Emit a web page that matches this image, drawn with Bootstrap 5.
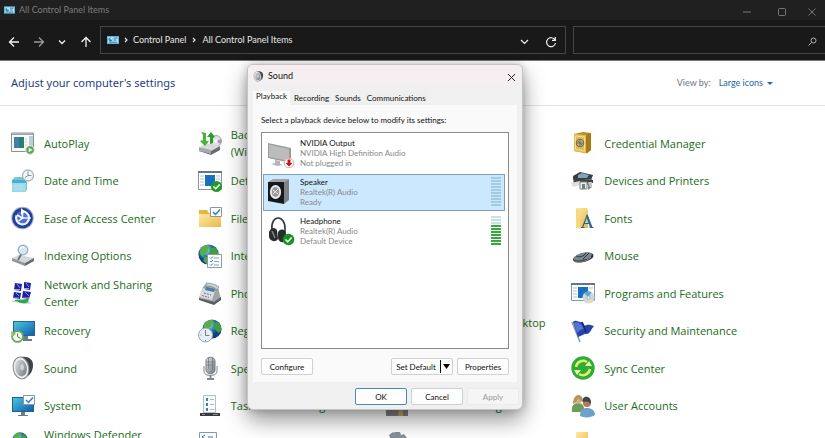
<!DOCTYPE html>
<html lang="en">
<head>
<meta charset="utf-8">
<meta name="viewport" content="width=device-width, initial-scale=1">
<title>All Control Panel Items</title>
<link href="https://cdn.jsdelivr.net/npm/bootstrap@5.3.0/dist/css/bootstrap.min.css" rel="stylesheet">
<style>
  body { font-family: "Lato", "Open Sans", sans-serif; font-size: 9px; line-height: 12px; background: #fff; color: #222; }
  button { line-height: inherit; }
  .title-strip { height: 20px; background: #202020; color: #7c7c7c; }
  .title-strip button { color: #777; width: 35px; }
  .title-strip button:last-child { width: 17px; text-align: left; margin-left: 9px; }
  .nav-strip { height: 41px; background: #191919; color: #e6e6e6; border-bottom: 1px solid #777; }
  .nav-strip button { color: #f2f2f2; }
  .nav-arrows { width: 100px; padding-left: 8px; }
  .nav-arrows button:nth-child(2) { color: #999; }
  .address-box { height: 28px; border: 1px solid #464646; flex: 0 1 466px; padding-left: 6px; }
  .address-box a { color: #e6e6e6; }
  .search-box { height: 28px; border: 1px solid #464646; border-right: 0; margin-left: 7px; }
  .search-box input { background: transparent; color: #e6e6e6; min-width: 0; outline: 0; }
  .nav-strip .search-box button { color: #b5b5b5; }
  .page-head { height: 45px; padding: 0 52px 0 11px; border-bottom: 1px solid #e3e3e3; }
  .page-head h1 { font: 11px/16px "Noto Sans", sans-serif; color: #1f3f7f; }
  .view-menu { color: #2468a8; font-size: 9px; line-height: 12px; }
  .view-menu::after { margin-left: 4px; vertical-align: 1px; border-width: 3px 3px 0; }
  .items-grid { display: grid; grid-template-columns: repeat(4, minmax(0, 1fr)); grid-auto-rows: 38px 37px; padding: 18px 67px 0 11px; font: 11px/17px "Open Sans", sans-serif; }
  .items-grid a { color: #1b6b20; gap: 9px; }
  .items-grid span { max-width: 134px; }
  .items-grid svg { width: 24px; height: 24px; flex: none; }
  .sound-window { left: 247px; top: 64px; width: 276px; background: #f0f0f0; border: 1px solid #c4c4c4; border-radius: 6px; box-shadow: 0 10px 22px rgba(0, 0, 0, .42), 0 0 8px rgba(0, 0, 0, .2); font-size: 8px; line-height: 10px; color: #111; overflow: hidden; }
  .sound-title { height: 22px; padding: 0 5px; font-size: 9px; background: linear-gradient(#f8edf0, #f5eff1 70%, #f0f0f0); }
  .sound-tabs { padding: 4px 0 0 5px; height: 18px; }
  .sound-tabs .nav-link { color: #111; padding: 2px; border: 0; border-radius: 0; line-height: 10px; margin: 0 0 0 2px; }
  .sound-tabs .nav-link.active { background: #fafafa; padding: 0 3px 4px; margin: 0; }
  .sound-panel { margin: 0 5px; background: #fafafa; padding: 10px 8px 7px; }
  .device-list { height: 217px; border: 1px solid #8a8a8a; background: #fff; padding: 2px 3px 0 1px; margin-top: 7px; gap: 2px; }
  .device-list .list-group-item { border: 1px solid transparent; padding: 2px 3px; height: 37px; color: #888; gap: 5px; background: none; }
  .device-list .list-group-item strong { color: #111; font-weight: 400; }
  .device-list .list-group-item.active { background: #cce8ff; border-color: #7fa0b8; margin: 0; }
  .device-list svg { width: 28px; height: 30px; flex: none; }
  .meter { width: 10px; gap: 1px; }
  .meter i { height: 2px; background: #a0cbe2; }
  .meter .dim { background: #c8dfe4; }
  .meter .lit { background: #35a83d; }
  .panel-actions { margin-top: 9px; }
  .win-btn { font-size: 8px; line-height: 10px; height: 17px; width: 52px; padding: 0; background: #fdfdfd; border: 1px solid #d0d0d0; border-radius: 2px; color: #111; }
  .win-btn.default { border-color: #4a88b8; }
  .win-btn:disabled { color: #999; background: #f5f5f5; border-color: #ebebeb; opacity: 1; }
  .split-btn { width: 62px; }
  .split-mark { width: 12px; border-left: 1px solid #111; height: 13px; }
  .sound-foot { padding: 6px 3px 4px; gap: 4px; }
</style>
</head>
<body>
<svg width="0" height="0" class="position-absolute" aria-hidden="true">
  <defs>
    <linearGradient id="blue" x2="1" y2="1"><stop stop-color="#49c6df"/><stop offset="1" stop-color="#145da8"/></linearGradient>
    <linearGradient id="gold" x2="1" y2="1"><stop stop-color="#ffe9a3"/><stop offset="1" stop-color="#e9b949"/></linearGradient>
    <linearGradient id="steel" x2="1" y2="1"><stop stop-color="#e6e8ea"/><stop offset="1" stop-color="#6d7276"/></linearGradient>
    <radialGradient id="globe" cx=".4" cy=".3"><stop stop-color="#8fd6f5"/><stop offset=".6" stop-color="#2574bb"/><stop offset="1" stop-color="#123f83"/></radialGradient>
    <symbol id="i-globe" viewBox="0 0 20 20"><circle cx="10" cy="10" r="9.6" fill="url(#globe)"/><path d="M2 6c2-4 5-5.500 8-5l2 2-3 2 1 2-4 2-1 4-3-3z" fill="#58b13d"/><path d="M12 4l4-1c3 3 4 6 3 9l-3 2-2-3-3-2z" fill="#3f9f3b"/><path d="M6 12l4 1 1 3-3 3-3-3z" fill="#4fa83f"/></symbol>
    <symbol id="i-panel" viewBox="0 0 12 8"><path d="M0 0h12v8H0z" fill="#5fb4dc"/><path d="M1 1h10v6H1z" fill="#b9e4f7"/><circle cx="3.500" cy="3.500" r="2" fill="#2e83b8"/><path d="M3.500 3.500V1.500a2 2 0 012 2z" fill="#fff"/><path d="M6.500 2h4M6.500 4h3M2 6.200h8" stroke="#287bae" fill="none"/></symbol>
    <symbol id="i-autoplay" viewBox="0 0 24 24"><path d="M.5 2h22v18.500H.5z" fill="#f7f8f8" stroke="#8a9297"/><path d="M1 2.500h21v1.500H1z" fill="#9ba4a9"/><path d="M3 6h10v11H3z" fill="#28806f"/><path d="M3 6h5v11H3z" fill="#447fae"/><path d="M14 8h2M14 11h2M14 14h2" stroke="#cfd4d6"/><path d="M18 5h4v12h-4z" fill="#b8d0d7"/><circle cx="19" cy="19" r="4.300" fill="#58a551" stroke="#e1eddf"/><path d="M17.700 16.700l3.800 2.300-3.800 2.300z" fill="#fff"/></symbol>
    <symbol id="i-backup" viewBox="0 0 24 24"><circle cx="18" cy="10" r="5.500" fill="#dfe3e6" stroke="#aaa"/><path d="M18 10l5-2a5 5 0 01-1 5z" fill="#b494b8"/><path d="M2 16l6-4 14 3-9 5z" fill="#d7d9da"/><path d="M1 17l12 3 9-5v4l-9 5-12-4z" fill="#686c6e"/><path d="M1 16l12 3v4L1 20z" fill="#a5a9ab"/><circle cx="18" cy="10" r="1.500" fill="#fff"/><path d="M3 1l5 1v8h3l-4 5-5-5 3-1V4z" fill="#46b535"/><path d="M12 13V6H9l4-5 4 5-2 1v5z" fill="#2c9c2d"/></symbol>
    <symbol id="i-color" viewBox="0 0 24 24"><path d="M2 4h20v13H2z" fill="url(#blue)"/><path d="M8 18h8v3H8z" fill="#777"/></symbol>
    <symbol id="i-safe" viewBox="0 0 24 24"><path d="M3 3l9-2 8 1v17l-4 3.500L3 20z" fill="#b88b28"/><path d="M3 3l12 1v18L3 20z" fill="#e3bd53"/><path d="M15 4l5-2v17l-5 3z" fill="#a77919"/><path d="M4.500 5l9 .8V20l-9-1.500z" fill="none" stroke="#f4dc8c"/><circle cx="9" cy="12" r="3.800" fill="#b9b59e" stroke="#786437"/><path d="M6 12h6M9 9v6M7 10l4 4" stroke="#63604c" stroke-width=".8"/></symbol>
    <symbol id="i-date" viewBox="0 0 24 24"><path d="M1 11l3-3h12v13l-2 2H1z" fill="#75c5dd"/><path d="M1 11h14v12H1z" fill="#9bd9ea"/><path d="M1 11h14v3H1z" fill="#4eaecd"/><path d="M2 17h12M2 20h12M5 15v7M10 15v7" stroke="#b5e6f2" stroke-width=".8"/><circle cx="17" cy="6.500" r="5.500" fill="#f2f5f6" stroke="#a9b6bb" stroke-width="1.300"/><path d="M17 2.500v4h3.500M17 6.500l-3 2" stroke="#6c7b83" fill="none" stroke-width=".8"/></symbol>
    <symbol id="i-default" viewBox="0 0 24 24"><path d="M.5 2.500h23v18H.5z" fill="#fff" stroke="#8997a0"/><path d="M0 2h24v2H0z" fill="#667681"/><path d="M2 7h4M2 10h4M2 13h4M2 16h4M18 7h4M18 10h4" stroke="#b8bfc4"/><path d="M7 6h10v11H7z" fill="#176fc1"/><circle cx="18.500" cy="17.500" r="5.500" fill="#259a26"/><path d="M15.500 17.500l2.200 2.200 4-4.200" fill="none" stroke="#fff" stroke-width="1.600"/></symbol>
    <symbol id="i-printer" viewBox="0 0 24 24"><path d="M2 7l7-4 13 3-2 5-18-1z" fill="#353d46"/><path d="M7 6l4-2 7 2-2 3H7z" fill="#86a2b4"/><path d="M3 10h18v8l-4 3v-5H7l-5 1z" fill="#85898c"/><path d="M2 9l20 2v3H3z" fill="#3f4347"/><path d="M0 14l9-2v4l-7 2z" fill="#dcdfe0"/><path d="M9 13h7v7H9z" fill="#f0f0f0" stroke="#81878a"/><path d="M11 15h3v5h-3z" fill="#6f7f82"/><path d="M17 13h4v5h-2z" fill="#c5c8ca"/></symbol>
    <symbol id="i-ease" viewBox="0 0 24 24"><circle cx="11.500" cy="12" r="11.300" fill="#adb3c0"/><circle cx="11.500" cy="12" r="10.300" fill="#203f9d"/><circle cx="11.500" cy="12" r="7" fill="#4f70cf"/><path d="M5.500 9.500a6.500 6.500 0 105-4" fill="none" stroke="#f2f5ff" stroke-width="2.200"/><path d="M11.500 4v8H20" stroke="#e7edff" stroke-width="1.600" fill="none"/><path d="M10 2l4 3.500-4 3.500z" fill="#fff"/><path d="M6 9l5.500 3-4 3" stroke="#fff" stroke-width="1.500" fill="none"/></symbol>
    <symbol id="i-folderopt" viewBox="0 0 24 24"><path d="M1 4h8l2 3h11v14H1z" fill="#e5b643"/><path d="M1 8h22v13H1z" fill="url(#gold)"/><path d="M12.500 1.500h11v9h-11z" fill="#fff" stroke="#8999a4"/><path d="M15 6l2.500 2.500L22 3.500" fill="none" stroke="#2c80c5" stroke-width="1.500"/></symbol>
    <symbol id="i-fonts" viewBox="0 0 24 24"><path d="M5 2h11l1 2v18H5z" fill="url(#gold)"/><path d="M5 2l4 3v18l-4-2z" fill="#f7d87f"/><path d="M11.500 21.500l4.500-12 5 12M13 17.500h6M10 21.500h3.500M18.500 21.500h4" stroke="#216c98" stroke-width="1.200" fill="none"/><path d="M16 9.500l4 12" stroke="#216c98" stroke-width="2"/></symbol>
    <symbol id="i-indexing" viewBox="0 0 24 24"><path d="M1 14l7-3 15 3-9 5z" fill="#d5d7d8"/><path d="M1 14l13 5v3L1 17z" fill="#92979a"/><path d="M14 19l9-5v3l-9 5z" fill="#656b6e"/><circle cx="12" cy="6" r="4.800" fill="#d3e7f5" stroke="#8fa9bd" stroke-width="1.200"/><path d="M10 10.500L7 16" stroke="#69737b" stroke-width="1.800"/><path d="M9 5a4 4 0 014-2" stroke="#fff" stroke-width="1.200" fill="none"/></symbol>
    <symbol id="i-internet" viewBox="0 0 24 24"><use href="#i-globe" width="21" height="21"/><path d="M9.500 10.500h14v13h-14z" fill="#fafcfd" stroke="#8f9aa4"/><path d="M12 13.500l1 1 2-2M12 17l1 1 2-2M12 20.500l1 1 2-2" stroke="#357ebd" fill="none"/><path d="M16 14h5M16 17.500h5M16 21h5" stroke="#8ba2b0"/></symbol>
    <symbol id="i-mouse" viewBox="0 0 24 24"><path d="M2 15c5-6 14-8 20-5 2 4-3 6-9 8-6 1-11 1-11-3z" fill="#30363b"/><path d="M2 14c5-5 13-7 19-4-1 4-4 5-10 6-4 1-8 1-9-2z" fill="#7b878f"/><path d="M5 12c4 2 8 0 10-3M12 15l6-6" stroke="#313c44" fill="none"/><path d="M3 17c4 2 12 1 17-4" stroke="#7f898f" fill="none"/></symbol>
    <symbol id="i-network" viewBox="0 0 24 24"><g fill="#1b22a9"><path d="M4 2l7 1-1 7-7-1zM13 1l7 1-1 7-6-1zM3 11l7 1-1 6-7-1zM12 10l8 1-2 7-7-1z"/></g><path d="M6 3l3 4M15 2l3 4M5 12l3 3M14 11l4 4" stroke="#8799ee"/><path d="M3 8.500h6M13 7.500h5M2 17h6M12 17h6" stroke="#c3c9dd" stroke-width=".8"/><path d="M4 19c4-1 8 0 11-1l3-1-1 5c-5 1-8 0-13-2z" fill="#30a74c"/><path d="M1 20l6 1M15 22h5" stroke="#b9c3c6"/></symbol>
    <symbol id="i-phone" viewBox="0 0 24 24"><path d="M5 6l4-4 11 4 3 12-7 4L1 17z" fill="#9fa6aa"/><path d="M1 17l15 4 7-5v3l-7 5-15-5z" fill="#575f64"/><path d="M5 7l12 3-3 9L1 16z" fill="#d9dcde"/><path d="M8 6l9 2-1 3-9-2z" fill="#447fa8"/><path d="M6 12l7 2M4 14.500l7 2" stroke="#747b80" stroke-dasharray="2 1"/><path d="M8 2c4 0 10 1 13 4l-2 3c-3-3-7-4-11-4z" fill="#c9ced1" stroke="#777e82" stroke-width=".6"/></symbol>
    <symbol id="i-programs" viewBox="0 0 24 24"><path d="M.5 2.500h23v17H.5z" fill="#fff" stroke="#89949b"/><path d="M0 2h24v2H0z" fill="#667681"/><path d="M2 7h4M2 10h4M2 13h4M2 16h4M18 7h4" stroke="#b8bfc4"/><path d="M7 6h10v11H7z" fill="#176fc1"/><circle cx="17.500" cy="16.500" r="6" fill="#c9d8e1"/><path d="M17.500 16.500l-4-4a6 6 0 017-1.500z" fill="#5ba6cd"/><path d="M17.500 16.500l5 3a6 6 0 01-7 2z" fill="#ead8bd"/><circle cx="17.500" cy="16.500" r="1.500" fill="#fff" stroke="#98acb7"/></symbol>
    <symbol id="i-recovery" viewBox="0 0 24 24"><path d="M2 2h22v15H2z" fill="#1c6897"/><path d="M3 3h20v13H3z" fill="url(#blue)"/><path d="M12 17h5v3h4v2h-9z" fill="#6f7c84"/><circle cx="6.500" cy="17.500" r="6.300" fill="#66aa51"/><circle cx="6.500" cy="17.500" r="4.600" fill="#f7faf5"/><path d="M6.500 14.500v3l3 2" stroke="#46733f" fill="none"/><path d="M0 12l1 6 4-3z" fill="#83c162"/></symbol>
    <symbol id="i-region" viewBox="0 0 24 24"><use href="#i-globe" x="4" width="20" height="20"/><circle cx="7.500" cy="16" r="7" fill="#e8eff4" stroke="#93a7b5"/><path d="M7.500 11v5.500h4M2.500 16h1M7.500 21v1" stroke="#6e8492" fill="none"/></symbol>
    <symbol id="i-flag" viewBox="0 0 24 24"><path d="M1 3l8 20" stroke="#8d9da9" stroke-width="1.600"/><path d="M2 3c4-3 5 1 9 0l3 4c2-2 5-1 9 0-4 5-4 8-8 8-3 0-4 2-8 3z" fill="#2743aa"/><path d="M3 4c4-2 5 1 7 1l3 5c-3 0-5 2-7 4z" fill="#5376d8"/><path d="M11 3l4 10" stroke="#15287e" stroke-width="1.600"/></symbol>
    <symbol id="i-sound" viewBox="0 0 24 24"><path d="M10 1c7-1 12 2 12 8s-3 11-9 13z" fill="#3d4348"/><ellipse cx="10" cy="12" rx="7.800" ry="11" transform="rotate(-10 10 12)" fill="#eceeef" stroke="#83898d"/><ellipse cx="10" cy="12" rx="5.800" ry="8.500" transform="rotate(-10 10 12)" fill="url(#steel)"/><ellipse cx="11" cy="11" rx="2.300" ry="3.500" fill="#d4d7d9" stroke="#9aa0a5" stroke-width=".7"/></symbol>
    <symbol id="i-mic" viewBox="0 0 24 24"><path d="M8 5c0-5 9-5 9 0v9c0 5-9 5-9 0z" fill="url(#steel)" stroke="#777d83"/><path d="M8 6h9M8 9h9M10.500 2v11M14.500 2v11" stroke="#747c83" stroke-width=".8"/><path d="M6 10v5c0 6 13 6 13 0v-5" fill="none" stroke="#a5a9af" stroke-width="1.400"/><path d="M12.500 19v3M9 23h7" stroke="#81878c" stroke-width="1.800"/></symbol>
    <symbol id="i-sync" viewBox="0 0 24 24"><circle cx="12" cy="12" r="11.700" fill="#2eac35"/><path d="M5 11a7.200 7.200 0 0111-5M19 13a7.200 7.200 0 01-11 5" fill="none" stroke="#dcee70" stroke-width="2.600"/><path d="M21 10h-7l4-5zM3 14h7l-4 5z" fill="#f1f6a3"/></symbol>
    <symbol id="i-system" viewBox="0 0 24 24"><path d="M1 3h22v15H1z" fill="#17658e"/><path d="M2 4h20v13H2z" fill="url(#blue)"/><path d="M10 18h4v3h3v1H7v-1h3z" fill="#6f7c84"/><path d="M12.500 1.500h11v9h-11z" fill="#fff" stroke="#8999a4"/><path d="M15 6l2.500 2.500L22 3.500" fill="none" stroke="#2c80c5" stroke-width="1.500"/></symbol>
    <symbol id="i-taskbar" viewBox="0 0 24 24"><path d="M5.500 1.500h12v17h-12z" fill="#f8fafb" stroke="#b4bec5"/><path d="M8 4h2v3H8zM8 9h2v3H8zM8 14h2v3H8z" fill="#3b83b7"/><path d="M12 5.500h4M12 10.500h4M12 15.500h4" stroke="#a4b9c4"/><path d="M2 19h20v3H2z" fill="#393a3e"/><path d="M4 20.500h3M15 20.500h5" stroke="#898d91"/></symbol>
    <symbol id="i-trouble" viewBox="0 0 24 24"><path d="M1 4h22v18H1z" fill="#9a9c9e"/><path d="M5 14l6-4 4 6 8-3v9H1v-8z" fill="#84837f"/><path d="M14 15l4 1v6h-5z" fill="#bfa575"/></symbol>
    <symbol id="i-users" viewBox="0 0 24 24"><path d="M1 18c-1-6 2-9 6-9s7 3 6 9z" fill="#6c9d58"/><circle cx="7" cy="6" r="3.800" fill="#d6b087"/><path d="M2 10c0-11 10-12 10-2-2-1-3-2-5-4-1 3-2 4-5 6z" fill="#b19a55"/><path d="M9 22c0-6 3-8 7-8s8 2 8 7c-4 3-11 3-15 1z" fill="#6d9fd0"/><circle cx="16" cy="9" r="4" fill="#b97955"/><path d="M12 8c-2-7 8-7 8 0l-1 2c-1-3-4-3-7-2z" fill="#41444d"/></symbol>
    <symbol id="i-firewall" viewBox="0 0 24 24"><use href="#i-globe" x="1" y="1" width="16" height="16"/><path d="M8 12h15v11H8z" fill="#b45638"/></symbol>
    <symbol id="i-tools" viewBox="0 0 24 24"><path d="M1.500 1.500h17v19h-17z" fill="#f8fbfc" stroke="#8799a5"/><path d="M7 4L4 6l3 2M10 6h5" stroke="#37759e" fill="none"/></symbol>
    <symbol id="i-gear" viewBox="0 0 24 24"><path d="M9 1h6l1 3 3-1 3 4-2 3 3 2-2 5-3 1v4h-5l-2-2-3 2-4-3 1-3-4-2 1-6 3-1-1-3 4-3 2 2z" fill="#879199"/><circle cx="12" cy="12" r="4" fill="#fff"/></symbol>
    <symbol id="i-folder" viewBox="0 0 24 24"><path d="M5 1h12v22H5z" fill="url(#gold)"/></symbol>
    <symbol id="i-monitor" viewBox="0 0 28 30"><path d="M1 5l23 5v15L1 20z" fill="#9b9b9b"/><path d="M2 6.500l20 4.500v12L2 19z" fill="#bcbcbc"/><path d="M8 22l5 1v3l3 1-6 1-6-2 4-1z" fill="#b5b5b5"/><circle cx="22" cy="25" r="4.800" fill="#fff" stroke="#dca9a9"/><path d="M20.500 21.500h3V25h2L22 28.500 18.500 25h2z" fill="#c6161d"/></symbol>
    <symbol id="i-speaker" viewBox="0 0 28 30"><path d="M1 5l5-3h16l-5 3z" fill="#a1a4a6"/><path d="M17 5l5-3v21l-5 4z" fill="#808385"/><path d="M1 5h16v22l-16-3z" fill="#17191b"/><ellipse cx="8.500" cy="15" rx="5.600" ry="7" fill="#ececec"/><ellipse cx="8.500" cy="15" rx="3.800" ry="5" fill="#999"/><path d="M6 13l5 4M6 17l5-5" stroke="#e9e9e9"/></symbol>
    <symbol id="i-headphone" viewBox="0 0 28 30"><path d="M5 14C3-2 19-2 18 14v4" fill="none" stroke="#35373a" stroke-width="1.600"/><path d="M2 16c2-5 6-5 8-2l1 9c-3 4-8 2-9-2zM11 16c3-5 8-2 8 2l-2 8c-4 1-6-2-6-5z" fill="#292b2e"/><path d="M5 15l3 7" stroke="#85888a" stroke-width="1.500"/><circle cx="21.500" cy="23.500" r="5.800" fill="#159321"/><path d="M18.500 23.500l2.300 2.300 3.800-4.300" fill="none" stroke="#fff" stroke-width="1.500"/></symbol>
  </defs>
</svg>

<div class="vh-100 d-flex flex-column overflow-hidden position-relative">
  <header>
    <div class="title-strip d-flex align-items-center">
      <svg class="ms-1 me-1 flex-shrink-0" width="11" height="8"><use href="#i-panel"/></svg>
      <span class="me-auto">All Control Panel Items</span>
      <button class="btn p-0 border-0 lh-1" aria-label="Minimize"><svg width="8" height="8"><path d="M0 4h8" stroke="currentColor"/></svg></button>
      <button class="btn p-0 border-0 lh-1" aria-label="Maximize"><svg width="8" height="8"><rect x=".5" y=".5" width="7" height="7" rx="1" fill="none" stroke="currentColor"/></svg></button>
      <button class="btn p-0 border-0 lh-1" aria-label="Close"><svg width="8" height="8"><path d="M.5.5l7 7m0-7l-7 7" stroke="currentColor"/></svg></button>
    </div>
    <div class="nav-strip d-flex align-items-center">
      <div class="nav-arrows d-flex justify-content-between flex-shrink-0 pe-2">
        <button class="btn p-0 border-0 lh-1" aria-label="Back"><svg width="12" height="12" fill="none" stroke="currentColor" stroke-width="1.300"><path d="M11 6H1.500M6 1.500L1.500 6 6 10.500"/></svg></button>
        <button class="btn p-0 border-0 lh-1" aria-label="Forward"><svg width="12" height="12" fill="none" stroke="currentColor" stroke-width="1.300"><path d="M1 6h9.500M6 1.500L10.500 6 6 10.500"/></svg></button>
        <button class="btn p-0 border-0 lh-1" aria-label="Recent locations"><svg width="10" height="12" fill="none" stroke="currentColor" stroke-width="1.300"><path d="M2 4.500l3 3 3-3"/></svg></button>
        <button class="btn p-0 border-0 lh-1" aria-label="Up"><svg width="12" height="12" fill="none" stroke="currentColor" stroke-width="1.300"><path d="M6 11V1.500M1.500 6L6 1.500 10.500 6"/></svg></button>
      </div>
      <nav class="address-box d-flex align-items-center" aria-label="Address">
        <svg class="flex-shrink-0" width="12" height="8"><use href="#i-panel"/></svg>
        <svg class="mx-1" width="6" height="8" fill="none" stroke="currentColor" stroke-width="1.200"><path d="M2 2l2 2-2 2"/></svg>
        <a class="text-decoration-none text-nowrap" href="#">Control Panel</a>
        <svg class="mx-1" width="8" height="8" fill="none" stroke="currentColor" stroke-width="1.200"><path d="M3 2l2 2-2 2"/></svg>
        <a class="text-decoration-none text-nowrap me-auto" href="#">All Control Panel Items</a>
        <button class="btn p-0 border-0 lh-1 me-3" aria-label="Previous locations"><svg width="9" height="9" fill="none" stroke="currentColor" stroke-width="1.200"><path d="M1 3l3.500 3.500L8 3"/></svg></button>
        <button class="btn p-0 border-0 lh-1 me-2" aria-label="Refresh"><svg width="12" height="12" fill="none" stroke="currentColor" stroke-width="1.200"><path d="M10 4A4.500 4.500 0 1 0 10.500 7M10.300 1v3.300H7"/></svg></button>
      </nav>
      <form class="search-box d-flex align-items-center flex-fill">
        <input class="border-0 flex-fill" type="search" aria-label="Search Control Panel">
        <button class="btn p-0 border-0 lh-1 me-2" type="button" aria-label="Search"><svg width="9" height="9" fill="none" stroke="currentColor"><circle cx="5.500" cy="3.500" r="2.500"/><path d="M3.500 5.500L.5 8.500"/></svg></button>
      </form>
    </div>
  </header>

  <main>
    <div class="page-head d-flex align-items-center">
      <h1 class="mb-0 me-auto">Adjust your computer's settings</h1>
      <span class="text-secondary me-2">View by:</span>
      <button class="btn view-menu dropdown-toggle p-0 border-0" type="button">Large icons</button>
    </div>
    <div class="items-grid" id="items"></div>
  </main>

  <section class="sound-window position-absolute" role="dialog" aria-labelledby="soundTitle">
    <div class="sound-title d-flex align-items-center">
      <svg class="me-1" width="11" height="11"><use href="#i-sound"/></svg>
      <span id="soundTitle" class="me-auto">Sound</span>
      <button class="btn p-0 border-0 lh-1" aria-label="Close Sound"><svg width="12" height="9"><path d="M3 1l7 7m0-7L3 8" stroke="#222"/></svg></button>
    </div>
    <div class="sound-tabs nav" role="tablist">
      <button class="nav-link active" role="tab" aria-selected="true">Playback</button>
      <button class="nav-link" role="tab">Recording</button>
      <button class="nav-link" role="tab">Sounds</button>
      <button class="nav-link" role="tab">Communications</button>
    </div>
    <div class="sound-panel">
      <div id="deviceHint">Select a playback device below to modify its settings:</div>
      <div class="device-list list-group rounded-0" aria-labelledby="deviceHint">
        <button class="list-group-item d-flex align-items-start text-start rounded-0">
          <svg><use href="#i-monitor"/></svg>
          <span><strong class="d-block">NVIDIA Output</strong>NVIDIA High Definition Audio<br>Not plugged in</span>
        </button>
        <button class="list-group-item active d-flex align-items-start text-start rounded-0">
          <svg><use href="#i-speaker"/></svg>
          <span class="me-auto"><strong class="d-block">Speaker</strong>Realtek(R) Audio<br>Ready</span>
          <span class="meter d-flex flex-column"><i></i><i></i><i></i><i></i><i></i><i></i><i></i><i></i><i></i><i></i></span>
        </button>
        <button class="list-group-item d-flex align-items-start text-start rounded-0">
          <svg><use href="#i-headphone"/></svg>
          <span class="me-auto"><strong class="d-block">Headphone</strong>Realtek(R) Audio<br>Default Device</span>
          <span class="meter d-flex flex-column"><i class="dim"></i><i class="dim"></i><i class="dim"></i><i class="lit"></i><i class="lit"></i><i class="lit"></i><i class="lit"></i><i class="lit"></i><i class="lit"></i><i class="lit"></i></span>
        </button>
      </div>
      <div class="panel-actions d-flex gap-1">
        <button class="btn win-btn me-auto">Configure</button>
        <button class="btn win-btn split-btn d-flex align-items-center"><span class="flex-fill">Set Default</span><span class="split-mark d-flex align-items-center justify-content-center"><svg width="7" height="5"><path d="M0 0h7L3.500 5z"/></svg></span></button>
        <button class="btn win-btn">Properties</button>
      </div>
    </div>
    <div class="sound-foot d-flex justify-content-end">
      <button class="btn win-btn default">OK</button>
      <button class="btn win-btn">Cancel</button>
      <button class="btn win-btn" disabled>Apply</button>
    </div>
  </section>
</div>

<script>
  const items = [
    ["autoplay", "AutoPlay"], ["backup", "Backup and Restore (Windows 7)"], ["color", "Color Management"], ["safe", "Credential Manager"],
    ["date", "Date and Time"], ["default", "Default Programs"], ["printer", "Device Manager"], ["printer", "Devices and Printers"],
    ["ease", "Ease of Access Center"], ["folderopt", "File Explorer Options"], ["folder", "File History"], ["fonts", "Fonts"],
    ["indexing", "Indexing Options"], ["internet", "Internet Options"], ["mouse", "Keyboard"], ["mouse", "Mouse"],
    ["network", "Network and Sharing Center"], ["phone", "Phone and Modem"], ["system", "Power Options"], ["programs", "Programs and Features"],
    ["recovery", "Recovery"], ["region", "Region"], ["system", "RemoteApp and Desktop Connections"], ["flag", "Security and Maintenance"],
    ["sound", "Sound"], ["mic", "Speech Recognition"], ["color", "Storage Spaces"], ["sync", "Sync Center"],
    ["system", "System"], ["taskbar", "Taskbar and Navigation"], ["trouble", "Troubleshooting"], ["users", "User Accounts"],
    ["firewall", "Windows Defender Firewall"], ["tools", "Windows Tools"], ["gear", "Windows Update"], ["folder", "Work Folders"]
  ];
  document.getElementById("items").innerHTML = items.map(([icon, name]) =>
    `<a href="#" class="d-flex align-items-center text-decoration-none"><svg aria-hidden="true"><use href="#i-${icon}"/></svg><span>${name}</span></a>`).join("");
</script>
<script src="https://cdn.jsdelivr.net/npm/bootstrap@5.3.0/dist/js/bootstrap.bundle.min.js"></script>
</body>
</html>
